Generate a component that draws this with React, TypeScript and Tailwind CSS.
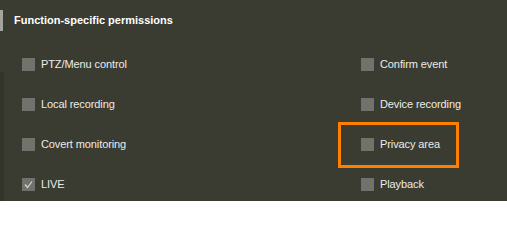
import React from "react";

function Box({ checked }: { checked?: boolean }) {
  return (
    <span className="w-[13px] h-[13px] bg-[#71726b] shrink-0 flex items-center justify-center">
      {checked && (
        <svg width="13" height="13" viewBox="0 0 13 13">
          <path d="M3 6.5 L5.5 9.5 L10 3.5" fill="none" stroke="#d8d8d4" strokeWidth="1.2" />
        </svg>
      )}
    </span>
  );
}

function Item({ label, checked, highlight }: { label: string; checked?: boolean; highlight?: boolean }) {
  return (
    <div className="relative h-[40px] flex items-center gap-[6px]">
      <Box checked={checked} />
      <span className="text-[11px] text-[#ecece8] leading-none tracking-[-0.1px]">{label}</span>
      {highlight && (
        <div className="absolute left-[-23px] top-[-2px] w-[121px] h-[46px] border-[3px] border-[#ff8000]" />
      )}
    </div>
  );
}

export default function App() {
  const left = ["PTZ/Menu control", "Local recording", "Covert monitoring", "LIVE"];
  const right = ["Confirm event", "Device recording", "Privacy area", "Playback"];
  return (
    <div
      className="w-[507px] h-[201px] bg-[#3a3b31] overflow-hidden flex flex-col"
      style={{ fontFamily: '"Liberation Sans", Arial, sans-serif' }}
    >
      <div className="h-[44px] shrink-0 flex items-start pt-[10px]">
        <div className="w-[3px] h-[21px] bg-[#a3a39f]" />
        <div className="h-[21px] flex items-center pl-[11px] text-[11px] font-bold text-white">
          Function-specific permissions
        </div>
      </div>
      <div className="flex flex-1">
        <div className="w-[4px] mt-[28px] bg-[#33342b]" />
        <div className="flex-1 grid grid-cols-[339px_1fr] pl-[18px]">
          <div className="flex flex-col">
            {left.map((l, i) => (
              <Item key={l} label={l} checked={i === 3} />
            ))}
          </div>
          <div className="flex flex-col">
            {right.map((l, i) => (
              <Item key={l} label={l} highlight={i === 2} />
            ))}
          </div>
        </div>
      </div>
    </div>
  );
}
